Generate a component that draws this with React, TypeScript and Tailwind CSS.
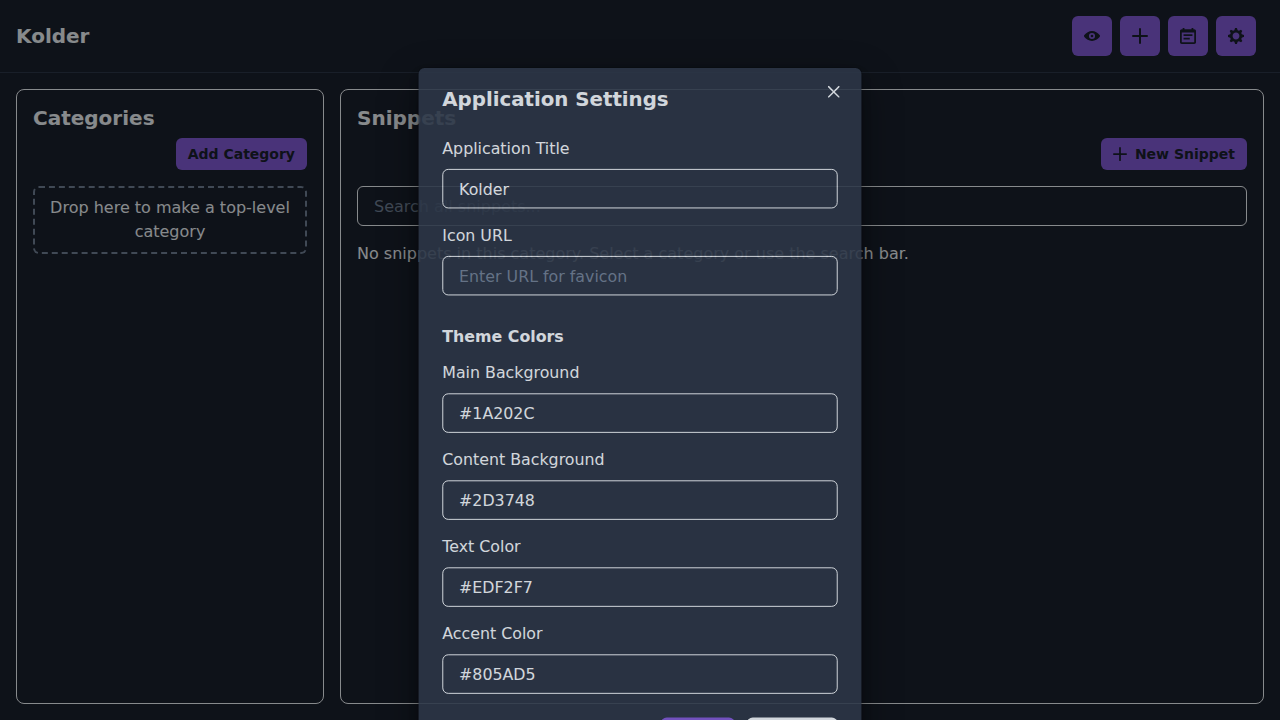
import type { ReactNode } from "react";

const PATHS = {
  view: "M23.432,10.524C20.787,7.614,16.4,4.538,12,4.6,7.6,4.537,3.213,7.615.568,10.524a2.211,2.211,0,0,0,0,2.948C3.182,16.351,7.507,19.4,11.839,19.4h.308c4.347,0,8.671-3.049,11.288-5.929A2.21,2.21,0,0,0,23.432,10.524ZM7.4,12A4.6,4.6,0,1,1,12,16.6,4.6,4.6,0,0,1,7.4,12Z",
  add: "M0,12a1.5,1.5,0,0,0,1.5,1.5h8.75a.25.25,0,0,1,.25.25V22.5a1.5,1.5,0,0,0,3,0V13.75a.25.25,0,0,1,.25-.25H22.5a1.5,1.5,0,0,0,0-3H13.75a.25.25,0,0,1-.25-.25V1.5a1.5,1.5,0,0,0-3,0v8.75a.25.25,0,0,1-.25.25H1.5A1.5,1.5,0,0,0,0,12Z",
  close: "M.439,21.44a1.5,1.5,0,0,0,2.122,2.121L11.823,14.3a.25.25,0,0,1,.354,0l9.262,9.263a1.5,1.5,0,1,0,2.122-2.121L14.3,12.177a.25.25,0,0,1,0-.354l9.263-9.262A1.5,1.5,0,0,0,21.439.44L12.177,9.7a.25.25,0,0,1-.354,0L2.561.44A1.5,1.5,0,0,0,.439,2.561L9.7,11.823a.25.25,0,0,1,0,.354Z",
  calendar: "M10.8889,5.5 L3.11111,5.5 L3.11111,7.05556 L10.8889,7.05556 L10.8889,5.5 Z M12.4444,1.05556 L11.6667,1.05556 L11.6667,0 L10.1111,0 L10.1111,1.05556 L3.88889,1.05556 L3.88889,0 L2.33333,0 L2.33333,1.05556 L1.55556,1.05556 C0.692222,1.05556 0.00777777,1.75556 0.00777777,2.61111 L0,12.5 C0,13.3556 0.692222,14 1.55556,14 L12.4444,14 C13.3,14 14,13.3556 14,12.5 L14,2.61111 C14,1.75556 13.3,1.05556 12.4444,1.05556 Z M12.4444,12.5 L1.55556,12.5 L1.55556,3.94444 L12.4444,3.94444 L12.4444,12.5 Z M8.55556,8.61111 L3.11111,8.61111 L3.11111,10.1667 L8.55556,10.1667 L8.55556,8.61111 Z",
  settings: "M14,7.77 L14,6.17 L12.06,5.53 L11.61,4.44 L12.49,2.6 L11.36,1.47 L9.55,2.38 L8.46,1.93 L7.77,0.01 L6.17,0.01 L5.54,1.95 L4.43,2.4 L2.59,1.52 L1.46,2.65 L2.37,4.46 L1.92,5.55 L0,6.23 L0,7.82 L1.94,8.46 L2.39,9.55 L1.51,11.39 L2.64,12.52 L4.45,11.61 L5.54,12.06 L6.23,13.98 L7.82,13.98 L8.45,12.04 L9.56,11.59 L11.4,12.47 L12.53,11.34 L11.61,9.53 L12.08,8.44 L14,7.75 L14,7.77 Z M7,10 C5.34,10 4,8.66 4,7 C4,5.34 5.34,4 7,4 C8.66,4 10,5.34 10,7 C10,8.66 8.66,10 7,10 Z",
};

function HeaderButton({ label, children }: { label: string; children: ReactNode }) {
  return (
    <button aria-label={label} className="mr-2 flex size-10 items-center justify-center rounded-md bg-[#805AD5] text-[#1A202C]">
      {children}
    </button>
  );
}

function Field({ label, value, placeholder }: { label: string; value?: string; placeholder?: string }) {
  return (
    <div>
      <label className="mb-2 block leading-6">{label}</label>
      <input
        defaultValue={value}
        placeholder={placeholder}
        className="block h-10 w-full rounded-md border border-[#EDF2F7] bg-transparent px-4 outline-none placeholder:text-[#718096]"
      />
    </div>
  );
}

function SettingsModal() {
  return (
    <section
      role="dialog"
      className="relative mt-16 flex h-[713.2px] w-[448px] shrink-0 scale-[0.9886] flex-col rounded-md bg-[#2D3748] opacity-88 shadow-[0_0_0_1px_rgba(0,0,0,0.1),0_5px_10px_rgba(0,0,0,0.2),0_15px_40px_rgba(0,0,0,0.4)]"
    >
      <header className="px-6 py-4 text-xl leading-[30px] font-semibold">Application Settings</header>
      <button aria-label="Close" className="absolute top-2 right-3 flex size-8 items-center justify-center">
        <svg viewBox="0 0 24 24" className="size-3" fill="currentColor"><path d={PATHS.close} /></svg>
      </button>
      <div className="flex flex-col gap-4 px-6 py-2">
        <Field label="Application Title" value="Kolder" />
        <Field label="Icon URL" placeholder="Enter URL for favicon" />
        <h2 className="mt-4 text-base leading-[19.2px] font-bold">Theme Colors</h2>
        <Field label="Main Background" value="#1A202C" />
        <Field label="Content Background" value="#2D3748" />
        <Field label="Text Color" value="#EDF2F7" />
        <Field label="Accent Color" value="#805AD5" />
      </div>
      <footer className="flex justify-end gap-3 px-6 py-4 font-semibold">
        <button className="h-10 rounded-md bg-[#805AD5] px-4 text-[#1A202C]">Save</button>
        <button className="h-10 rounded-md bg-[#EDF2F7] px-4 text-[#1A202C]">Cancel</button>
      </footer>
    </section>
  );
}

export default function App() {
  return (
    <div className="relative h-[720px] w-full overflow-hidden bg-[#1A202C] font-['DejaVu_Sans',sans-serif] text-base text-[#EDF2F7]">
      <div className="flex h-full flex-col">
        <header className="flex h-[73px] shrink-0 items-center justify-between border-b border-[#2D3748] px-4">
          <h1 className="text-xl leading-6 font-bold">Kolder</h1>
          <div className="flex">
            <HeaderButton label="Preview">
              <svg viewBox="0 0 24 24" className="size-4" fill="currentColor"><path d={PATHS.view} /><circle cx="12" cy="12" r="2" /></svg>
            </HeaderButton>
            <HeaderButton label="Add">
              <svg viewBox="0 0 24 24" className="size-4" fill="currentColor"><path d={PATHS.add} /></svg>
            </HeaderButton>
            <HeaderButton label="Calendar">
              <svg viewBox="0 0 14 14" className="size-4" fill="currentColor"><path d={PATHS.calendar} /></svg>
            </HeaderButton>
            <HeaderButton label="Settings">
              <svg viewBox="0 0 14 14" className="size-4" fill="currentColor"><path d={PATHS.settings} /></svg>
            </HeaderButton>
          </div>
        </header>
        <main className="grid min-h-0 flex-1 grid-cols-[1fr_3fr] gap-4 p-4">
          <section className="rounded-lg border border-[#EDF2F7] p-4">
            <h2 className="text-xl leading-6 font-bold">Categories</h2>
            <div className="mt-2 mb-4 flex justify-end">
              <button className="h-8 rounded-md bg-[#805AD5] px-3 text-sm font-semibold text-[#1A202C]">Add Category</button>
            </div>
            <div className="rounded-md border-2 border-dashed border-[#718096] p-2 text-center leading-6">
              Drop here to make a top-level category
            </div>
          </section>
          <section className="rounded-lg border border-[#EDF2F7] p-4">
            <h2 className="text-xl leading-6 font-bold">Snippets</h2>
            <div className="mt-2 mb-4 flex justify-end">
              <button className="flex h-8 items-center gap-2 rounded-md bg-[#805AD5] px-3 text-sm font-semibold text-[#1A202C]">
                <svg viewBox="0 0 24 24" className="size-3.5" fill="currentColor"><path d={PATHS.add} /></svg>
                New Snippet
              </button>
            </div>
            <input
              placeholder="Search all snippets..."
              className="mb-4 block h-10 w-full rounded-md border border-[#EDF2F7] bg-transparent px-4 outline-none placeholder:text-[#718096]"
            />
            <p className="leading-6">No snippets in this category. Select a category or use the search bar.</p>
          </section>
        </main>
      </div>
      <div className="absolute inset-0 bg-black/48 opacity-90" />
      <div className="absolute inset-0 flex items-start justify-center overflow-hidden">
        <SettingsModal />
      </div>
    </div>
  );
}
